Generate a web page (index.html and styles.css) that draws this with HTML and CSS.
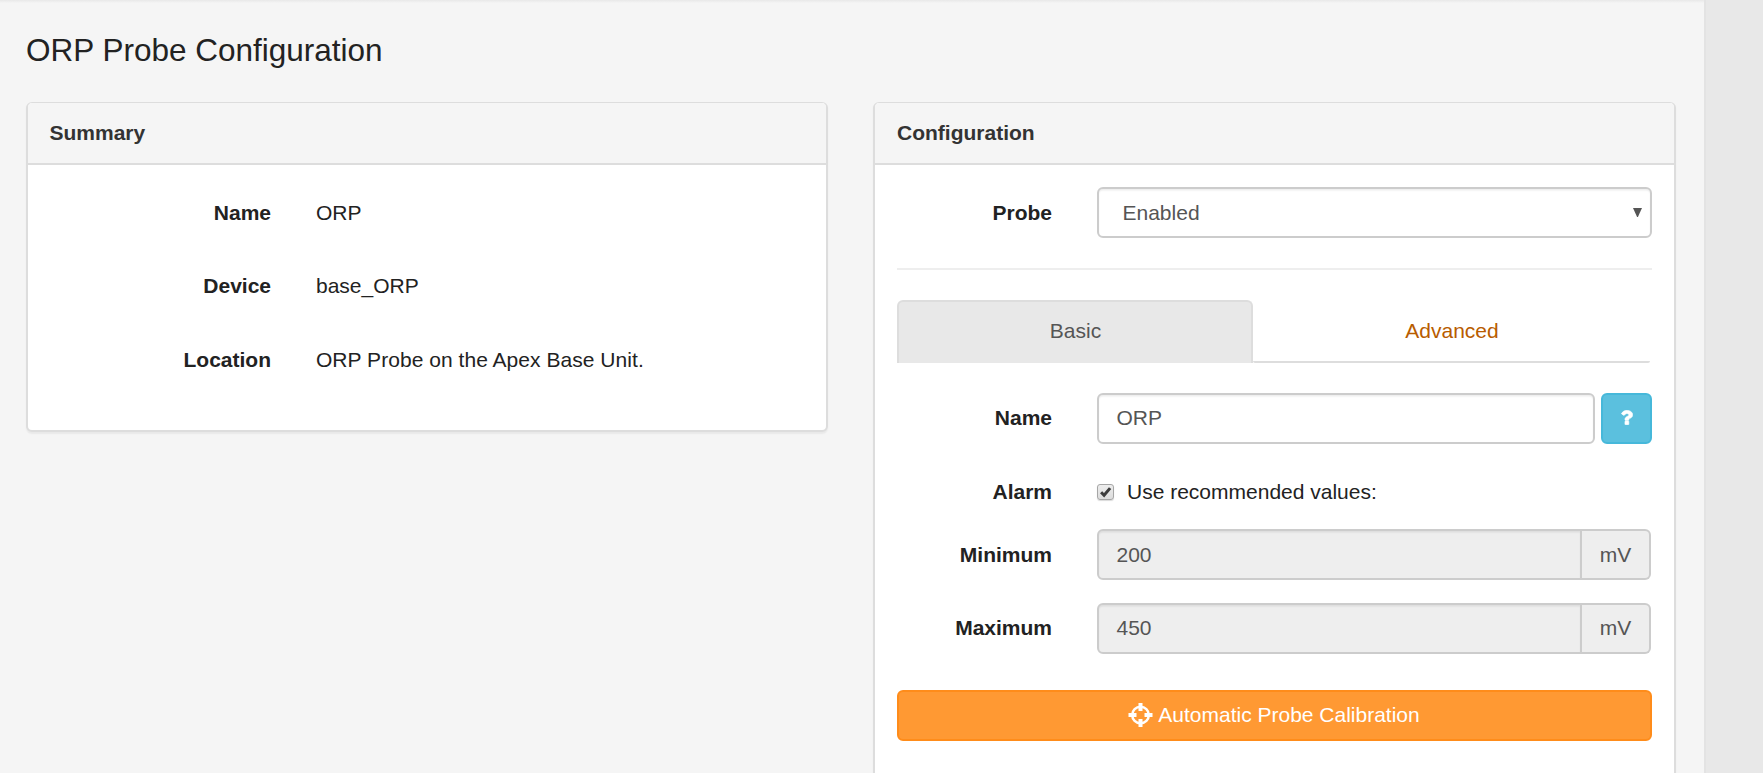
FILE: index.html
```html
<!DOCTYPE html>
<html lang="en">
<head>
<meta charset="utf-8">
<title>ORP Probe Configuration</title>
<link rel="stylesheet" href="styles.css">
</head>
<body>
<main class="page">
  <h1 class="title">ORP Probe Configuration</h1>
  <div class="columns">
    <section class="panel summary">
      <h2 class="panel-heading">Summary</h2>
      <dl class="facts">
        <div class="fact"><dt class="label">Name</dt><dd>ORP</dd></div>
        <div class="fact"><dt class="label">Device</dt><dd>base_ORP</dd></div>
        <div class="fact"><dt class="label">Location</dt><dd class="wide">ORP Probe on the Apex Base Unit.</dd></div>
      </dl>
    </section>
    <section class="panel config">
      <h2 class="panel-heading">Configuration</h2>
      <form class="form">
        <div class="row">
          <span class="label">Probe</span>
          <div class="control select">Enabled
            <svg class="arrow" viewBox="0 0 9 9"><path d="M0 0H9L4.9 9H4.1Z"/></svg>
          </div>
        </div>
        <hr class="rule">
        <nav class="tabs">
          <a class="tab active">Basic</a>
          <a class="tab">Advanced</a>
        </nav>
        <div class="row name">
          <span class="label">Name</span>
          <div class="control">ORP</div>
          <button class="help" type="button" aria-label="Help">
            <svg class="question" viewBox="60 103 986 1330" preserveAspectRatio="none"><path d="M704 1128v240q0 16-12 28t-28 12h-240q-16 0-28-12t-12-28v-240q0-16 12-28t28-12h240q16 0 28 12t12 28zm316-600q0 54-15.500 101t-35 76.500-55 59.500-57.500 43.500-61 35.500q-41 23-68.500 65t-27.500 67q0 17-12 32.500t-28 15.500h-240q-15 0-25.500-18.500t-10.500-37.500v-45q0-83 65-156.500t143-108.500q59-27 84-56t25-76q0-42-46.500-74t-107.500-32q-65 0-108 29-35 25-107 115-13 16-31 16-12 0-25-8l-164-125q-13-10-15.500-25t5.500-28q160-266 464-266 80 0 161 31t146 83 106 127.500 41 158.500z"/></svg>
          </button>
        </div>
        <div class="row alarm">
          <span class="label">Alarm</span>
          <span class="checkbox"><svg viewBox="0 0 14 14"><path d="M2.600 7.200L5.600 10.300L11.600 3.100" fill="none" stroke="#3c3c3c" stroke-width="3"/></svg></span>
          <span class="check-text">Use recommended values:</span>
        </div>
        <div class="row limit">
          <span class="label">Minimum</span>
          <div class="control disabled">200</div><span class="unit">mV</span>
        </div>
        <div class="row limit max">
          <span class="label">Maximum</span>
          <div class="control disabled">450</div><span class="unit">mV</span>
        </div>
        <button class="calibrate" type="button">
          <svg class="target" viewBox="0 0 24 24"><circle cx="12" cy="12" r="8.300" fill="none" stroke="#fff" stroke-width="2.500"/><path d="M10 0h4v8h-4zM10 16h4v8h-4zM0 10h8v4H0zM16 10h8v4h-8z"/></svg>
          <span>Automatic Probe Calibration</span>
        </button>
      </form>
    </section>
  </div>
</main>
</body>
</html>
```
FILE: styles.css
```css
* { box-sizing: border-box; }
body {
  margin: 0;
  height: 773px;
  overflow: hidden;
  background: #e8e8e8;
  color: #222;
  font: 21px/30px "Liberation Sans", Arial, sans-serif;
}
.page {
  width: 1706px;
  height: 773px;
  padding: 30px 28px 0 26px;
  overflow: hidden;
  background: linear-gradient(#e8e8e8, #f5f5f5 3px);
  border-right: 2px solid #e3e3e3;
}
.title { margin: 0 0 32px; font-size: 31.500px; line-height: 40px; font-weight: 400; }
.columns { display: flex; align-items: flex-start; gap: 45px; }
.panel {
  flex: none;
  width: 802px;
  background: #fff;
  border: 2px solid #ddd;
  border-top-width: 1px;
  border-radius: 6px;
  box-shadow: 0 1.500px 1.500px rgba(0, 0, 0, .05);
}
.summary { height: 330px; }
.config { width: 803px; height: 720px; }
.panel-heading {
  margin: 0;
  height: 62px;
  padding: 15px 22px 0;
  background: #f5f5f5;
  border-bottom: 2px solid #ddd;
  border-radius: 4px 4px 0 0;
  color: #333;
  font-size: 21px;
  line-height: 30px;
}
.summary .panel-heading { padding-left: 21.500px; }
.label { flex: none; color: #222; font-weight: 700; text-align: right; }
.facts { display: flex; flex-direction: column; gap: 43.400px; margin: 0; padding-top: 33px; }
.fact { display: flex; gap: 45px; }
.fact .label { width: 243px; }
dd { margin: 0; }
.wide { letter-spacing: .04px; }
.form { padding: 22px 22px 0; }
.row { display: flex; align-items: center; height: 51px; }
.row .label { width: 155px; margin-right: 45px; }
.control {
  flex: 1;
  height: 51px;
  padding: 8.500px 17.500px;
  background: #fff;
  border: 2px solid #ccc;
  border-radius: 6px;
  box-shadow: inset 0 1.500px 1.500px rgba(0, 0, 0, .075);
  color: #555;
}
.select { display: flex; justify-content: space-between; align-items: center; padding: 0 8px 0 23.500px; }
.arrow { width: 9px; height: 9px; fill: #555; }
.rule { height: 2px; margin: 30px 0; border: 0; background: #eee; }
.tabs { display: flex; height: 63px; margin-bottom: 30px; padding-right: 2px; }
.tab {
  width: 397px;
  padding: 16px 0 0 1px;
  border-bottom: 2px solid #ddd;
  border-radius: 2px;
  color: #b85c00;
  text-align: center;
}
.tab.active {
  width: 356px;
  padding-top: 14px;
  background: #e8e8e8;
  border: 2px solid #ddd;
  border-bottom: 0;
  border-radius: 6px 6px 0 0;
  color: #555;
}
.name .control { padding-top: 8px; }
.name .label { padding-bottom: 1px; }
.help {
  display: flex;
  align-items: center;
  justify-content: center;
  width: 51px;
  height: 51px;
  margin-left: 6px;
  padding: 0 0 2px;
  background: #5bc0de;
  border: 2px solid #46b8da;
  border-radius: 6px;
}
.question { width: 12px; height: 15px; fill: #fff; stroke: #fff; stroke-width: 50; }
.alarm { height: 30px; margin: 33px 0 22px; }
.checkbox {
  width: 17px;
  height: 16px;
  margin-bottom: 1px;
  border: 1.500px solid #a6a6a6;
  border-radius: 3px;
  background: linear-gradient(#ededed, #dcdcdc);
  box-shadow: 0 1px 1px rgba(0, 0, 0, .15);
}
.checkbox svg { display: block; width: 15px; height: 14px; }
.check-text { margin-left: 13px; }
.limit { margin-bottom: 23px; padding-right: 1px; }
.limit .control { border-radius: 6px 0 0 6px; }
.disabled { background: #eee; }
.unit {
  width: 69px;
  height: 51px;
  padding-top: 8.500px;
  background: #eee;
  border: 2px solid #ccc;
  border-left: 0;
  border-radius: 0 6px 6px 0;
  color: #555;
  text-align: center;
}
.max .control { padding-top: 8px; }
.max .unit { padding-top: 8px; }
.max .label { padding-bottom: 2px; }
.calibrate {
  display: flex;
  align-items: center;
  justify-content: center;
  gap: 5px;
  width: 100%;
  height: 51px;
  margin-top: 36px;
  padding: 0 1px 2px 0;
  background: #ff9933;
  border: 2px solid #ff8c1a;
  border-radius: 6px;
  color: #fff;
  font: inherit;
}
.target { width: 25px; height: 24px; fill: #fff; }
```
